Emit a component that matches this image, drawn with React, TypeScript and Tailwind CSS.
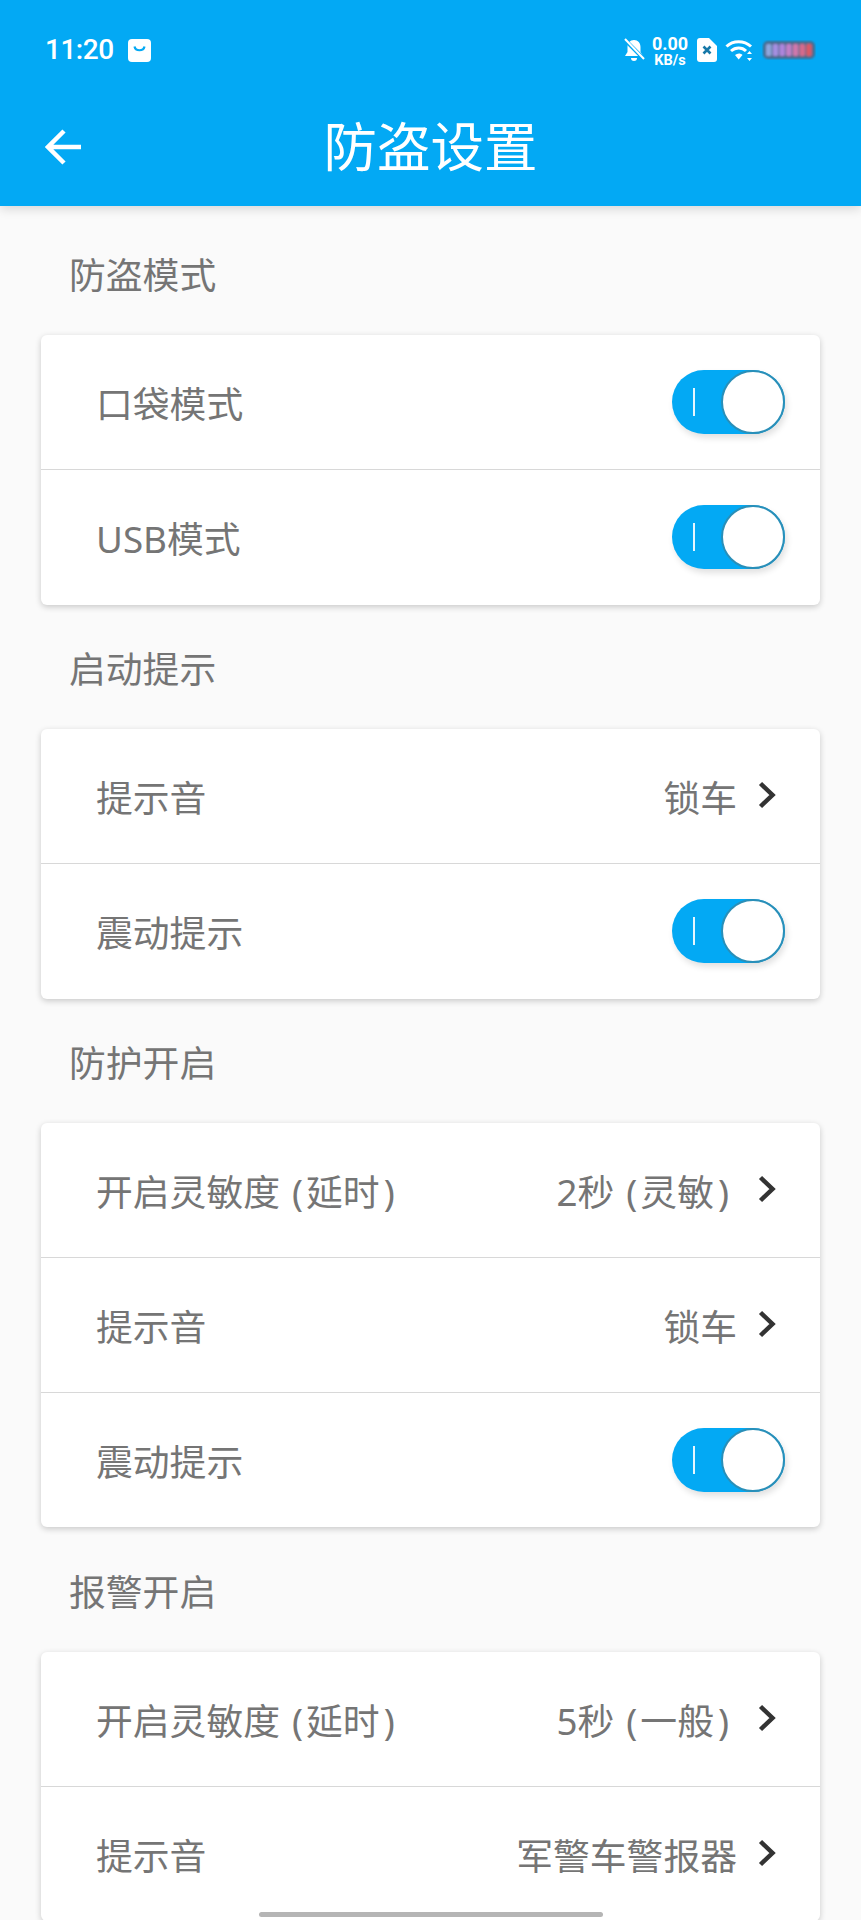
import { ReactNode } from 'react'

const Toggle = () => (
  <div className="relative w-[113px] h-[64px] rounded-full bg-[#03a9f4] flex items-center justify-end shadow-[2px_4px_6px_rgba(0,0,0,0.12)]">
    <div className="absolute left-[21px] top-[18px] w-[2px] h-[28px] bg-white/90" />
    <div className="w-[64px] h-[64px] rounded-full bg-white border-2 border-[#2a8fb8]" />
  </div>
)

const Chevron = () => (
  <svg width="18" height="28" viewBox="0 0 18 28" className="ml-[21px] mr-[3px] -translate-y-[1px]">
    <path d="M2.5 2.5 L14.5 14 L2.5 25.5" fill="none" stroke="#333333" strokeWidth="4.5" />
  </svg>
)

// parens in the app render narrow with uneven gaps around them
const Paren = ({ before, inner, after }: { before: string; inner: string; after?: string }) => (
  <span className={after ? 'mr-[8px]' : ''}>
    {before}
    <span className="ml-[12px] mr-[3px]">(</span>
    {inner}
    <span className="ml-[4px]">)</span>
  </span>
)

const Row = ({ label, value, toggle, last }: { label: ReactNode; value?: ReactNode; toggle?: boolean; last?: boolean }) => (
  <div className={`h-[134.75px] pl-[55px] flex items-center justify-between ${toggle ? 'pr-[35px]' : 'pr-[41px]'} ${last ? '' : 'border-b border-[#d8d8d8]'}`}>
    <span className="pt-[5px]">{label}</span>
    {toggle ? (
      <Toggle />
    ) : (
      <div className="flex items-center">
        <span className="pt-[5px]">{value}</span>
        <Chevron />
      </div>
    )}
  </div>
)

const Section = ({ title, children }: { title: string; children: ReactNode }) => (
  <section>
    <div className="h-[124.5px] pl-[69px] pt-[6px] flex items-center">{title}</div>
    <div className="mx-[41px] bg-white rounded-[6px] shadow-[0_2px_6px_rgba(0,0,0,0.2)]">{children}</div>
  </section>
)

const batterySegments = ['#8fa6dc', '#a48fe0', '#ae85dc', '#c280c8', '#cf78ac', '#d66a8c', '#dc5a66']

const StatusIcons = () => (
  <div className="flex items-center text-white">
    <svg width="22" height="24" viewBox="0 0 22 24" fill="white">
      <path d="M11 2c4 0 6.500 3 6.500 7v5l2.500 4H2l2.500-4V9C4.500 5 7 2 11 2z" />
      <path d="M8 20h6a3 3 0 0 1-6 0z" />
      <path d="M1 1l20 20" stroke="#03a9f4" strokeWidth="4" />
      <path d="M2 1l19 20" stroke="white" strokeWidth="2" />
    </svg>
    <div className="ml-[6px] w-[38px] pt-[3px] flex flex-col items-center font-bold leading-none font-['Roboto',sans-serif]">
      <span className="text-[18px] leading-[18px]">0.00</span>
      <span className="text-[14.500px] leading-[15px]">KB/s</span>
    </div>
    <svg width="20" height="24" viewBox="0 0 20 24" className="ml-[8px]">
      <path d="M3 0h9l8 8v13a3 3 0 0 1-3 3H3a3 3 0 0 1-3-3V3a3 3 0 0 1 3-3z" fill="white" />
      <path d="M6.500 8.500l7 7M13.500 8.500l-7 7" stroke="#1678a8" strokeWidth="2.600" />
    </svg>
    <svg width="29" height="22" viewBox="0 0 29 22" className="ml-[8px]">
      <g fill="none" stroke="white" strokeWidth="3">
        <path d="M1.500 7.500C8 1 19 1 26 7.500" />
        <path d="M6 12c4.500-4 11-4 15 0" />
      </g>
      <path d="M10 16c2.500-2 5.500-2 7.500 0L13.700 20.500z" fill="white" />
      <path d="M24.500 12l2.500 3h-5zM24.500 22l-2.500-3h5z" fill="white" />
    </svg>
    <svg width="54" height="20" viewBox="0 0 54 20" className="ml-[8px]">
      <defs>
        <filter id="soft">
          <feGaussianBlur stdDeviation="0.8" />
        </filter>
      </defs>
      <g filter="url(#soft)">
        <rect x="1" y="1" width="52" height="18" rx="5" fill="#4a6a8c" />
        {batterySegments.map((c, i) => (
          <rect key={c} x={4 + i * 6.7} y="4" width="5.500" height="12" rx="1.500" fill={c} />
        ))}
      </g>
    </svg>
  </div>
)

export default function App() {
  return (
    <div className="relative w-[861px] h-[1920px] overflow-hidden bg-[#fafafa] text-[#757575] text-[36.800px] leading-none font-['Noto_Sans','Noto_Sans_CJK_SC',sans-serif]">
      <header className="relative z-10 h-[206px] mb-[4.500px] bg-[#03a9f4] text-white shadow-[0_3px_10px_rgba(0,0,0,0.14)]">
        <div className="h-[100px] pl-[45px] pr-[45px] flex items-center justify-between">
          <div className="flex items-center">
            <span className="text-[28px] font-medium tracking-[-0.5px] font-['Roboto',sans-serif]">11:20</span>
            <svg width="23" height="23" viewBox="0 0 23 23" className="ml-[14px]">
              <rect width="23" height="23" rx="4" fill="white" />
              <path d="M6.500 7.500c1 5 9 5 10 0" fill="none" stroke="#03a9f4" strokeWidth="2.200" />
            </svg>
          </div>
          <StatusIcons />
        </div>
        <div className="h-[94px] px-[45px] grid grid-cols-[1fr_auto_1fr] items-center">
          <svg width="38" height="36" viewBox="0 0 38 36">
            <path d="M36 18H3M19 2L3 18l16 16" fill="none" stroke="white" strokeWidth="4.500" />
          </svg>
          <h1 className="text-[53.500px] font-normal">防盗设置</h1>
          <div />
        </div>
      </header>
      <Section title="防盗模式">
        <Row label="口袋模式" toggle />
        <Row label="USB模式" toggle last />
      </Section>
      <Section title="启动提示">
        <Row label="提示音" value="锁车" />
        <Row label="震动提示" toggle last />
      </Section>
      <Section title="防护开启">
        <Row label={<Paren before="开启灵敏度" inner="延时" />} value={<Paren before="2秒" inner="灵敏" after="gap" />} />
        <Row label="提示音" value="锁车" />
        <Row label="震动提示" toggle last />
      </Section>
      <Section title="报警开启">
        <Row label={<Paren before="开启灵敏度" inner="延时" />} value={<Paren before="5秒" inner="一般" after="gap" />} />
        <Row label="提示音" value="军警车警报器" last />
      </Section>
      <div className="absolute z-20 left-[259px] top-[1912px] w-[344px] h-[5px] rounded-full bg-[#b5b5b5]" />
    </div>
  )
}
